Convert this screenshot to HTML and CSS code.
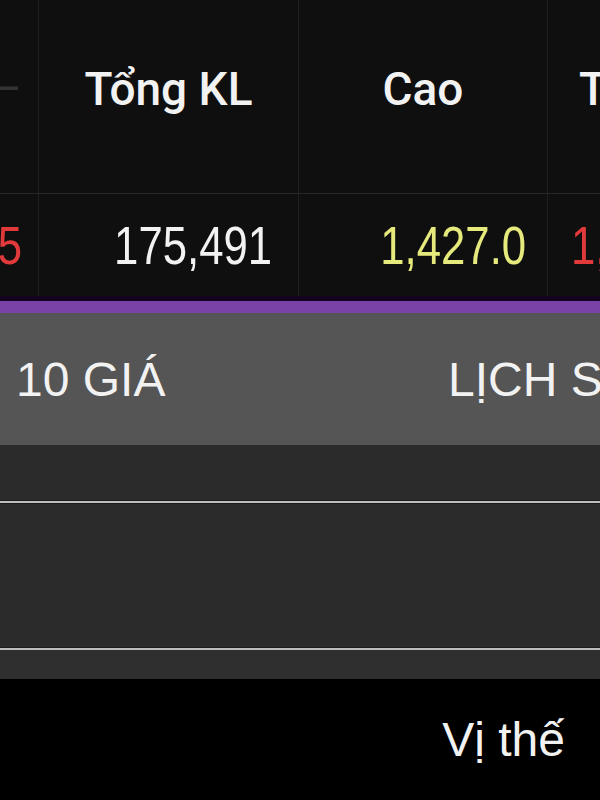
FILE: index.html
```html
<!DOCTYPE html>
<html lang="vi">
<head>
  <meta charset="utf-8">
  <title>Bảng giá</title>
  <meta name="viewport" content="width=device-width, initial-scale=1.0">
  <link rel="stylesheet" href="styles.css">
</head>
<body>
  <div class="quote-table">
    <div class="quote-row quote-head">
      <div class="cell cell-edge"><span class="dim">–</span></div>
      <div class="cell cell-main">Tổng KL</div>
      <div class="cell cell-main">Cao</div>
      <div class="cell cell-tail">Thấp</div>
    </div>
    <div class="quote-row quote-data">
      <div class="cell cell-edge"><span class="num red">-12.5</span></div>
      <div class="cell cell-main"><span class="num">175,491</span></div>
      <div class="cell cell-main"><span class="num yellow">1,427.0</span></div>
      <div class="cell cell-tail"><span class="num num-left red">1,411.0</span></div>
    </div>
  </div>

  <div class="tabs">
    <div class="tab">10 GIÁ</div>
    <div class="tab">LỊCH SỬ KHỚP</div>
  </div>

  <div class="book">
    <div class="book-line"></div>
    <div class="book-row"></div>
    <div class="book-line"></div>
    <div class="book-foot"></div>
  </div>

  <div class="bottom-bar">
    <span class="bottom-link">Vị thế</span>
  </div>
</body>
</html>
```

FILE: styles.css
```css
html, body {
  margin: 0;
  padding: 0;
  background-color: #000;
}
body {
  width: 600px;
  height: 800px;
  overflow: hidden;
  font-family: 'Liberation Sans', Arial, sans-serif;
  color: #f2f2f2;
}
.quote-table {
  background-color: #0f0f0f;
}
.quote-row {
  display: flex;
}
.quote-head {
  height: 193px;
  border-bottom: 1px solid #272727;
  font-family: Roboto, 'Liberation Sans', sans-serif;
  font-size: 46px;
  font-weight: 500;
}
.quote-data {
  height: 102px;
  font-size: 54px;
}
.cell {
  display: flex;
  align-items: center;
  flex-shrink: 0;
  overflow: hidden;
  white-space: nowrap;
  border-right: 1px solid #1f1f1f;
  box-sizing: border-box;
}
.cell-edge {
  width: 39px;
  justify-content: flex-end;
  padding-right: 16px;
}
.cell-main {
  width: 260px;
  justify-content: center;
}
.cell-main:nth-child(3) {
  width: 249px;
}
.cell-tail {
  width: 200px;
  padding-left: 30px;
  border-right: none;
}
.quote-head .cell {
  padding-bottom: 16px;
}
.quote-head .cell-tail {
  padding-left: 31px;
}
.quote-data .cell-main {
  justify-content: flex-end;
  padding-right: 26px;
}
.quote-data .cell-main:nth-child(3) {
  padding-right: 21px;
}
.quote-data .cell-tail {
  padding-left: 23px;
}
/* numbers use a narrow face in the app */
.num {
  display: inline-block;
  transform: scaleX(0.81);
  transform-origin: right center;
}
.num-left {
  transform-origin: left center;
}
.dim {
  color: #333;
  font-weight: normal;
}
.red {
  color: #e23a3a;
}
.yellow {
  color: #e6ea7c;
}
.tabs {
  display: flex;
  align-items: center;
  border-top: 5px solid #14031f;
  box-shadow: inset 0 12px 0 #7a42a6;
  padding-top: 12px;
  box-sizing: border-box;
  height: 149px;
  background-color: #555;
  font-size: 48px;
  white-space: nowrap;
  overflow: hidden;
}
.tab {
  flex-shrink: 0;
}
.tab:first-child {
  width: 432px;
  padding-left: 16px;
}
.book {
  background-color: #2b2b2b;
  padding-top: 56px;
}
.book-line {
  height: 2px;
  background-color: #bdbdbd;
  box-shadow: 0 -1px 0 #1c1c1c, 0 1px 0 #1c1c1c;
}
.book-row {
  height: 145px;
}
.book-foot {
  height: 29px;
  background-color: #2f2f2f;
}
.bottom-bar {
  height: 120px;
  display: flex;
  align-items: center;
  justify-content: flex-end;
  padding-right: 35px;
  background-color: #000;
  font-size: 48px;
}
```
